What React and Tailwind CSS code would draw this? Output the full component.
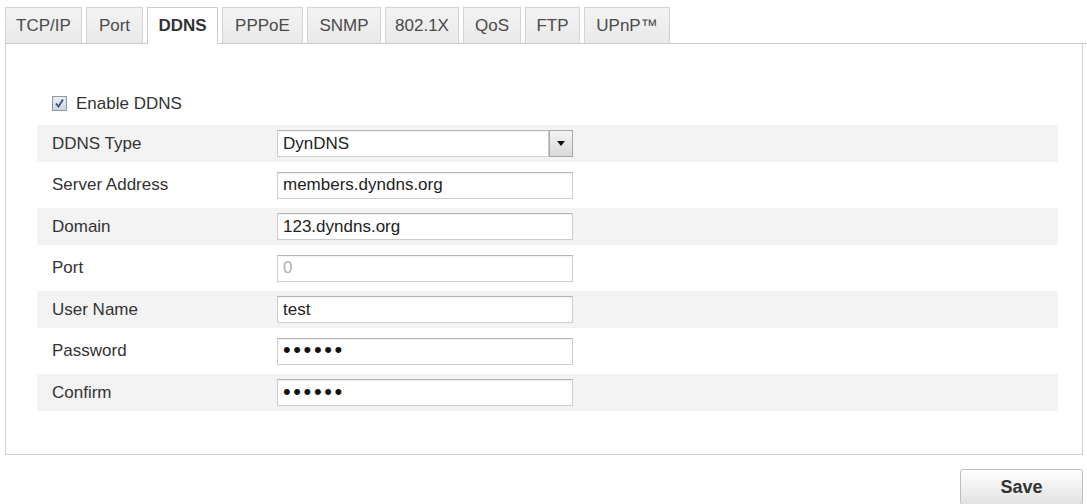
import React from 'react';

const tabs = [
  { label: 'TCP/IP', w: 'w-[77px]' },
  { label: 'Port', w: 'w-[57px]' },
  { label: 'DDNS', w: 'w-[71px]', active: true },
  { label: 'PPPoE', w: 'w-[81px]' },
  { label: 'SNMP', w: 'w-[74px]' },
  { label: '802.1X', w: 'w-[74px]' },
  { label: 'QoS', w: 'w-[58px]' },
  { label: 'FTP', w: 'w-[55px]' },
  { label: 'UPnP™', w: 'w-[86px]' },
];

const fields = [
  { label: 'DDNS Type', type: 'select', value: 'DynDNS' },
  { label: 'Server Address', value: 'members.dyndns.org' },
  { label: 'Domain', value: '123.dyndns.org' },
  { label: 'Port', value: '0', disabled: true },
  { label: 'User Name', value: 'test' },
  { label: 'Password', type: 'password' },
  { label: 'Confirm', type: 'password' },
];

function Field({ field }) {
  // box that looks like an old-style text input
  const box = 'h-[27px] border border-[#cdcdcd] border-t-[#b5b5b5] bg-white shadow-[inset_0_1px_1px_rgba(0,0,0,0.06)] flex items-center';

  if (field.type === 'select') {
    return (
      <div className="flex w-[296px]">
        <div className={`${box} flex-1 pl-[5px] text-[#222]`}>{field.value}</div>
        <div className="h-[27px] w-[24px] border border-[#a9a9a9] bg-gradient-to-b from-[#f4f4f4] to-[#d9d9d9] flex items-center justify-center">
          <svg width="8" height="5" viewBox="0 0 8 5">
            <path d="M0 0h8L4 5z" fill="#111" />
          </svg>
        </div>
      </div>
    );
  }

  if (field.type === 'password') {
    return (
      <div className={`${box} w-[296px] pl-[5px] text-[#111] text-[22px] tracking-[2.6px] leading-none`}>
        <span className="-mt-[2px]">••••••</span>
      </div>
    );
  }

  return (
    <div className={`${box} w-[296px] pl-[5px] ${field.disabled ? 'text-[#b0b0b0]' : 'text-[#222]'}`}>
      {field.value}
    </div>
  );
}

export default function App() {
  return (
    <div className="w-[1087px] h-[504px] overflow-hidden bg-white pt-[7px] pl-[5px] text-[17px] text-[#333] font-['Liberation_Sans',Arial,sans-serif]">
      {/* Tabs */}
      <div className="flex items-end gap-1 h-[37px] border-b border-[#cbcbcb]">
        {tabs.map((t) =>
          t.active ? (
            <div
              key={t.label}
              className={`${t.w} h-[37px] -mb-px bg-white border border-b-0 border-[#cbcbcb] flex items-center justify-center font-bold text-[#333]`}
            >
              {t.label}
            </div>
          ) : (
            <div
              key={t.label}
              className={`${t.w} h-[36px] bg-gradient-to-b from-[#f3f3f3] to-[#e9e9e9] border border-b-0 border-[#d3d3d3] flex items-center justify-center text-[#4a4a4a]`}
            >
              {t.label}
            </div>
          )
        )}
      </div>

      {/* Panel */}
      <div className="w-[1078px] h-[411px] border-x border-b border-[#d2d2d2] pt-[51px] pl-[31px]">
        <div className="flex items-center h-[17px] ml-[15px]">
          <span className="w-[15px] h-[15px] border border-[#8e99a8] bg-gradient-to-b from-[#e9eef5] to-[#cdd6e2] flex items-center justify-center">
            <svg width="11" height="11" viewBox="0 0 11 11">
              <path d="M2 5.5l2.5 3L9 1.5" stroke="#3d4f7a" strokeWidth="1.8" fill="none" />
            </svg>
          </span>
          <span className="ml-[9px]">Enable DDNS</span>
        </div>

        <div className="mt-[13px] flex flex-col gap-[4.5px] w-[1021px]">
          {fields.map((f, i) => (
            <div
              key={f.label}
              className={`h-[37px] flex items-center ${i % 2 === 0 ? 'bg-[#f3f3f3]' : 'bg-white'}`}
            >
              <div className="w-[240px] pl-[15px]">{f.label}</div>
              <Field field={f} />
            </div>
          ))}
        </div>
      </div>

      {/* Save */}
      <div className="w-[1078px] flex justify-end mt-[14px]">
        <button className="w-[123px] h-[36px] rounded-[3px] border border-[#bdbdbd] bg-gradient-to-b from-white to-[#e2e2e2] font-bold text-[18px] text-[#333]">
          Save
        </button>
      </div>
    </div>
  );
}
